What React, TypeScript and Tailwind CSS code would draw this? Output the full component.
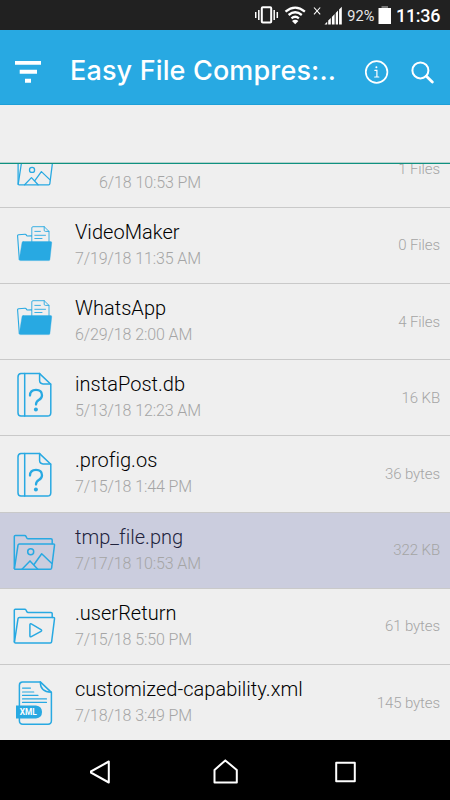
import React from "react";

type IconKind = "image" | "imageSmall" | "folder" | "unknown" | "video" | "xml";

interface FileItem {
	name: string;
	date: string;
	size: string;
	icon: IconKind;
	iconClass?: string;
	selected?: boolean;
}

const files: FileItem[] = [
	{ name: "", date: "6/18 10:53 PM", size: "1 Files", icon: "imageSmall" },
	{ name: "VideoMaker", date: "7/19/18 11:35 AM", size: "0 Files", icon: "folder" },
	{ name: "WhatsApp", date: "6/29/18 2:00 AM", size: "4 Files", icon: "folder", iconClass: "pb-[5px]" },
	{ name: "instaPost.db", date: "5/13/18 12:23 AM", size: "16 KB", icon: "unknown" },
	{ name: ".profig.os", date: "7/15/18 1:44 PM", size: "36 bytes", icon: "unknown", iconClass: "pt-[8px]" },
	{ name: "tmp_file.png", date: "7/17/18 10:53 AM", size: "322 KB", icon: "image", iconClass: "pb-px", selected: true },
	{ name: ".userReturn", date: "7/15/18 5:50 PM", size: "61 bytes", icon: "video" },
	{ name: "customized-capability.xml", date: "7/18/18 3:49 PM", size: "145 bytes", icon: "xml" },
];

const OpenFolder = () => (
	<>
		<path d="M3.3 42.5 V10.6 Q3.3 9.6 4.3 9.6 H13.6 Q14.6 9.6 15 10.4 L15.8 12 Q16.2 12.8 17.2 12.8 H40 Q41.2 12.8 41.2 14 V17.8" />
		<path d="M8.4 17.9 H42.4 Q43.7 17.9 43.5 19.2 L40.6 42.2 Q40.4 43.3 39.3 43.3 H4.5 Q3.3 43.3 3.5 42.1 L7 19.1 Q7.2 17.9 8.4 17.9 Z" />
	</>
);

const ImageFolder = () => (
	<>
		<OpenFolder />
		<circle cx="19.7" cy="25.8" r="3" />
		<path d="M11 43.2 L19 34.9 L26.8 43.2 M23 38.5 L30.7 27.8 L40.6 37.2" />
	</>
);

const FileIcon = ({ kind }: { kind: IconKind }) => (
	<svg
		viewBox="0 0 48 48"
		className="w-12 h-12 overflow-visible"
		fill="none"
		stroke="#28a9e2"
		strokeWidth="1.5"
		strokeLinecap="round"
		strokeLinejoin="round"
	>
		{kind === "image" && <ImageFolder />}
		{kind === "imageSmall" && (
			<g transform="translate(4.3 3) scale(.85)">
				<ImageFolder />
			</g>
		)}
		{kind === "video" && (
			<g transform="translate(0 -2.4)">
				<OpenFolder />
				<path d="M18.9 25.2 Q18.9 23.6 20.3 24.3 L30 30 Q31.3 30.9 30 31.7 L20.3 37 Q18.9 37.7 18.9 36.2 Z" />
			</g>
		)}
		{kind === "folder" && (
			<>
				<path
					d="M8.3 38.5 L6.6 15 Q6.5 13.9 7.6 13.8 L14 13.2 Q15 13.1 15.3 14 Q15.6 15 16.6 15 L20.5 14.9"
					strokeWidth="1.1"
				/>
				<path d="M20.8 20.6 V6.9 Q20.8 5.7 22 5.7 H33.2 L38 10.4 V20.6 M33.2 5.7 V9.2 Q33.2 10.4 34.4 10.4 H38" strokeWidth="0.9" />
				<path d="M23.8 10.4 H29.4 M23.8 14.3 H34.5 M23.8 17.5 H31" strokeWidth="0.9" />
				<path
					d="M12.2 20.6 H39.6 Q40.9 20.6 40.7 21.9 L38.9 38.4 Q38.7 39.6 37.5 39.6 H9.5 Q8.1 39.6 8.3 38.3 L11 21.7 Q11.2 20.6 12.2 20.6 Z"
					fill="#28a9e2"
					strokeWidth="0.4"
				/>
			</>
		)}
		{kind === "unknown" && (
			<g transform="translate(0 0.4)">
				<path d="M10 -0.8 H28.6 L39.8 9.8 V38.3 Q39.8 41.6 36.5 41.6 H10 Q7 41.6 7 38.3 V2.5 Q7 -0.8 10 -0.8 Z" />
				<path d="M13.7 -0.8 V41.6 M28.6 -0.8 V6.2 Q28.6 9.4 32 9.5 L39.6 9.7" />
				<path d="M19 21.2 Q19 15.4 25 15.4 Q31 15.4 31 20.8 Q31 23.8 27.8 25.7 Q25 27.4 25 30.2" strokeWidth="2.3" />
				<circle cx="24.9" cy="35.1" r="2" fill="#28a9e2" stroke="none" />
			</g>
		)}
		{kind === "xml" && (
			<>
				<path d="M11.5 2.9 H29.3 L40.4 13.4 V41.8 Q40.4 45.2 37 45.2 H11.8 Q8.4 45.2 8.4 41.8 V6.2 Q8.4 2.9 11.5 2.9 Z" />
				<path d="M29.3 2.9 Q29.2 12.8 40.2 13.2" />
				<path d="M11.5 9.1 H19.5 M11.5 13 H22.8 M11.5 16.4 H27 M11.5 19.9 H35.5 M11.5 23.4 H35.5" strokeWidth="1.1" />
				<path d="M5 26.4 H25 Q31 27 31 33 Q31 39 25 39.4 H5 Z" fill="#28a9e2" stroke="none" />
				<text x="8.8" y="36" fontSize="8.6" textLength="17" lengthAdjust="spacingAndGlyphs" fontWeight="700" fill="#fff" stroke="none">
					XML
				</text>
			</>
		)}
	</svg>
);

const StatusBar = () => (
	<div className="h-[30px] shrink-0 bg-[#212121] text-white flex items-center">
		<svg viewBox="255 0 140 30" className="w-[140px] h-[30px] ml-[255px] shrink-0">
			<rect x="261.8" y="7.2" width="9.4" height="15.4" rx="1" fill="none" stroke="#fff" strokeWidth="2" />
			<path d="M258.8 10 V20 M255.7 12 V18 M274.2 10 V20 M277.3 12 V18" stroke="#fff" strokeWidth="1.5" />
			<path
				d="M285.5 11.6 Q295.2 3.6 304.9 11.6 M288.6 15 Q295.2 9.6 301.8 15 M291.5 18.4 Q295.2 15.2 298.9 18.4"
				fill="none"
				stroke="#fff"
				strokeWidth="2.3"
			/>
			<path d="M295.2 24.3 L292 20.9 Q295.2 18.4 298.4 20.9 Z" fill="#fff" />
			<path d="M314 7.5 L320.2 14.3 M320.2 7.5 L314 14.3" stroke="#fff" strokeWidth="1.1" />
			<path
				d="M324.5 24.5 L327.2 21.7 V24.5 Z M328.2 24.5 V20.6 L330.8 17.9 V24.5 Z M331.9 24.5 V16.9 L334.6 14.1 V24.5 Z M335.7 24.5 V13 L338 10.6 V24.5 Z M339.1 24.5 V9.5 L341.8 6.7 V24.5 Z"
				fill="#fff"
			/>
			<text x="347.3" y="20.8" fontSize="15" textLength="27" lengthAdjust="spacingAndGlyphs" fill="#e8e8e8">
				92%
			</text>
			<path d="M381.5 6 H388 V8 H381.5 Z" fill="#777" />
			<rect x="378.5" y="8" width="12.5" height="16" fill="#fff" />
		</svg>
		<span className="text-[18px] leading-[30px] font-medium pt-px ml-px tracking-[-0.3px]">11:36</span>
	</div>
);

const Header = () => (
	<div className="h-[75px] shrink-0 bg-[#28a9e2] text-white flex items-center border-b border-[#1d9fd8]">
		<svg viewBox="0 0 26 24" className="w-[26px] h-6 ml-[15px] mt-[10px]" fill="#fff">
			<path d="M0 1 H26 V4.8 H0 Z M4.7 9.8 H22 V13.8 H4.7 Z M10 18.7 H16 V22.7 H10 Z" />
		</svg>
		<h1 className="font-[Inter,sans-serif] text-[27px] leading-9 font-medium ml-[29px] mt-[8px] w-[294px] whitespace-nowrap tracking-[0.15px]">
			Easy File Compres:..
		</h1>
		<svg viewBox="0 0 70 26" className="w-[70px] h-[26px] mt-[12px] shrink-0" fill="none" stroke="#fff" strokeLinecap="round">
			<circle cx="12.6" cy="12" r="10.8" strokeWidth="1.7" />
			<path d="M10.8 10.3 H12.9 V16.9 M10.7 17 H14.8" strokeWidth="1.2" />
			<circle cx="12.4" cy="7.2" r="1" fill="#fff" stroke="none" />
			<circle cx="56.4" cy="10.4" r="8" strokeWidth="2" />
			<path d="M62.4 16.3 L68.3 22" strokeWidth="2.8" />
		</svg>
	</div>
);

const FileRow = ({ file }: { file: FileItem }) => (
	<div
		className={`h-[76.2px] shrink-0 flex border-b border-[#c9c9c9] ${
			file.selected ? "bg-[#cbcdde]" : "bg-[#efefef]"
		}`}
	>
		<div className={`w-[75px] pl-[11px] flex items-center shrink-0 ${file.iconClass || ""}`}>
			<FileIcon kind={file.icon} />
		</div>
		<div className="flex-1 pt-3 whitespace-nowrap">
			<div
				className={`h-6 text-[20px] leading-6 font-light tracking-[0.03px] ${
					file.selected ? "text-[#22243d]" : "text-black"
				}`}
			>
				{file.name}
			</div>
			<div
				className={`mt-[3px] text-[16px] leading-6 font-light tracking-[-0.1px] text-[#a5a5a5] ${
					file.name ? "" : "pl-6"
				}`}
			>
				{file.date}
			</div>
		</div>
		<div className="pr-[10px] self-center text-[15px] leading-6 font-light tracking-[-0.1px] text-[#a5a5a5] whitespace-nowrap">
			{file.size}
		</div>
	</div>
);

const NavBar = () => (
	<div className="h-[60px] shrink-0 bg-black flex items-center justify-center">
		<svg viewBox="0 0 270 28" className="w-[270px] h-7" fill="none" stroke="#fff" strokeWidth="2" strokeLinejoin="round">
			<path d="M18.8 5.5 V26.5 L-0.2 16 Z" />
			<path d="M124.5 26.6 V14 L135.3 4.4 L146.8 14 V26.6 Z" />
			<path d="M246.2 6.8 H264.8 V25.2 H246.2 Z" />
		</svg>
	</div>
);

const App: React.FC = () => {
	return (
		<div className="w-[450px] h-[800px] flex flex-col overflow-hidden bg-[#efefef] font-[Roboto,sans-serif]">
			<StatusBar />
			<Header />
			<div className="h-[59px] shrink-0 border-b border-[#0f9180] shadow-[inset_0_-1px_0_#b4d0cc]" />
			<div className="flex-1 min-h-0 overflow-hidden">
				<div className="-mt-[32.4px] flex flex-col">
					{files.map((file) => (
						<FileRow key={file.name} file={file} />
					))}
				</div>
			</div>
			<NavBar />
		</div>
	);
};

export default App;
